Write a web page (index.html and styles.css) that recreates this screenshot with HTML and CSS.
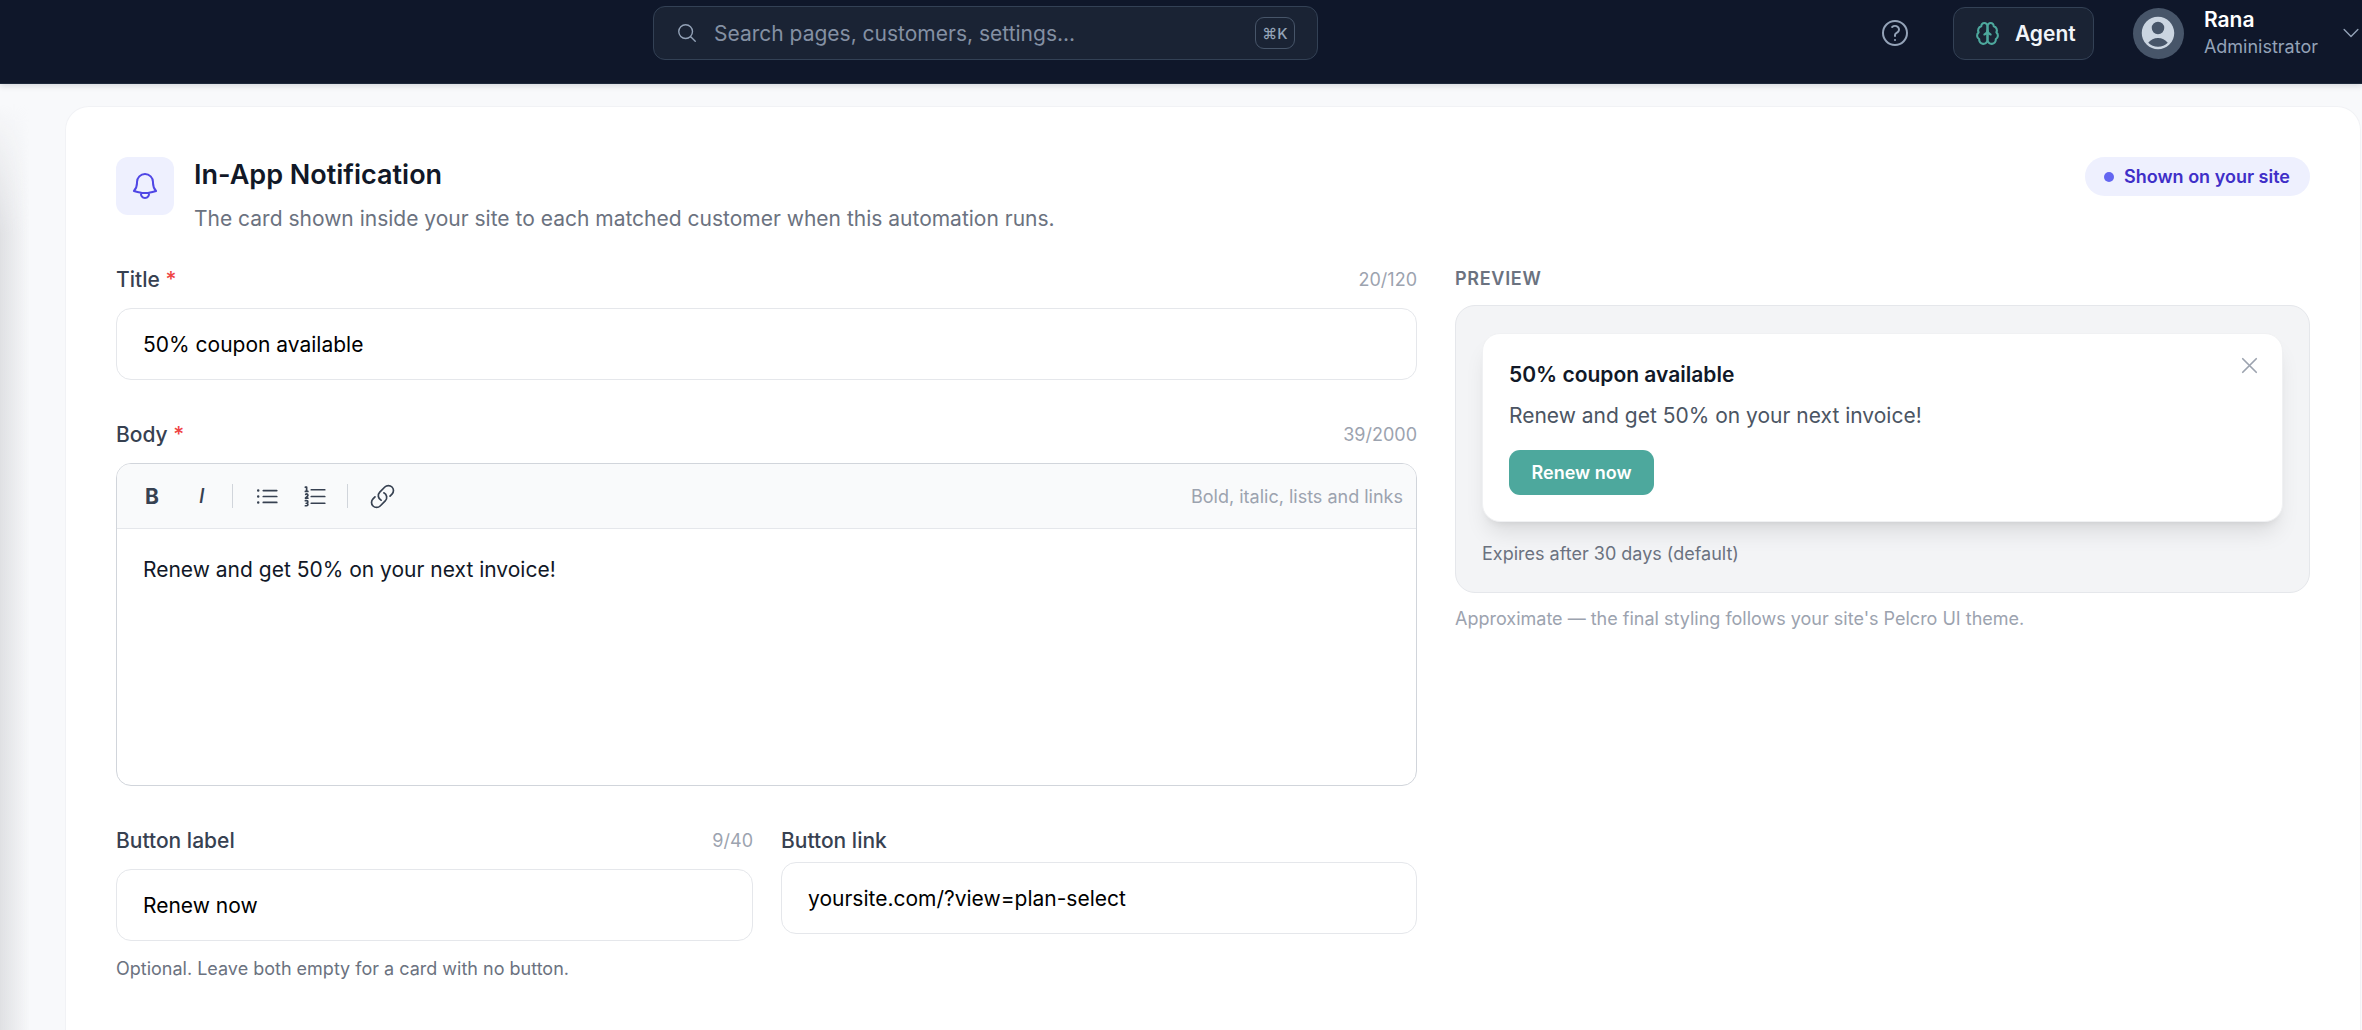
FILE: index.html
```html
<!DOCTYPE html>
<html lang="en">
<head>
    <meta charset="UTF-8">
    <meta name="viewport" content="width=device-width, initial-scale=1.0">
    <title>In-App Notification</title>
    <link rel="stylesheet" href="styles.css">
</head>
<body>
    <header class="topbar">
        <div class="search">
            <svg class="search-icon" viewBox="0 0 24 24" fill="none" stroke="currentColor" stroke-width="1.5" stroke-linecap="round" stroke-linejoin="round">
                <path d="m21 21-5.197-5.197m0 0A7.5 7.5 0 1 0 5.196 5.196a7.5 7.5 0 0 0 10.607 10.607Z"></path>
            </svg>
            <span class="search-text">Search pages, customers, settings...</span>
            <kbd class="kbd">⌘K</kbd>
        </div>
        <div class="topbar-right">
            <svg class="help-icon" viewBox="0 0 24 24" fill="none" stroke="currentColor" stroke-width="1.5" stroke-linecap="round" stroke-linejoin="round">
                <path d="M9.879 7.519c1.171-1.025 3.071-1.025 4.242 0 1.172 1.025 1.172 2.687 0 3.712-.203.179-.43.326-.67.442-.745.361-1.45.999-1.45 1.827v.75M21 12a9 9 0 1 1-18 0 9 9 0 0 1 18 0Zm-9 5.25h.008v.008H12v-.008Z"></path>
            </svg>
            <button class="agent-btn">
                <svg class="agent-icon" viewBox="0 0 24 24" fill="none" stroke="currentColor" stroke-width="2" stroke-linecap="round" stroke-linejoin="round">
                    <path d="M12 5a3 3 0 1 0-5.997.125 4 4 0 0 0-2.526 5.77 4 4 0 0 0 .556 6.588A4 4 0 1 0 12 18Z"></path>
                    <path d="M12 5a3 3 0 1 1 5.997.125 4 4 0 0 1 2.526 5.77 4 4 0 0 1-.556 6.588A4 4 0 1 1 12 18Z"></path>
                    <path d="M15 13a4.5 4.5 0 0 1-3-4 4.5 4.5 0 0 1-3 4"></path>
                </svg>
                Agent
            </button>
            <div class="avatar">
                <svg viewBox="0 0 24 24" fill="currentColor">
                    <path fill-rule="evenodd" clip-rule="evenodd" d="M18.685 19.097A9.723 9.723 0 0 0 21.75 12c0-5.385-4.365-9.75-9.75-9.75S2.25 6.615 2.25 12a9.723 9.723 0 0 0 3.065 7.097A9.716 9.716 0 0 0 12 21.75a9.716 9.716 0 0 0 6.685-2.653Zm-12.54-1.285A7.486 7.486 0 0 1 12 15a7.486 7.486 0 0 1 5.855 2.812A8.224 8.224 0 0 1 12 20.25a8.224 8.224 0 0 1-5.855-2.438ZM15.75 9a3.75 3.75 0 1 1-7.5 0 3.75 3.75 0 0 1 7.5 0Z"></path>
                </svg>
            </div>
            <div class="user">
                <div class="user-name">Rana</div>
                <div class="user-role">Administrator</div>
            </div>
            <svg class="chevron" viewBox="0 0 24 24" fill="none" stroke="currentColor" stroke-width="1.5" stroke-linecap="round" stroke-linejoin="round">
                <path d="m19.5 8.25-7.5 7.5-7.5-7.5"></path>
            </svg>
        </div>
    </header>

    <main class="main">
        <section class="card">
            <div class="card-head">
                <div class="bell-box">
                    <svg viewBox="0 0 24 24" fill="none" stroke="currentColor" stroke-width="1.5" stroke-linecap="round" stroke-linejoin="round">
                        <path d="M14.857 17.082a23.848 23.848 0 0 0 5.454-1.31A8.967 8.967 0 0 1 18 9.75V9A6 6 0 0 0 6 9v.75a8.967 8.967 0 0 1-2.312 6.022c1.733.64 3.56 1.085 5.455 1.31m5.714 0a24.255 24.255 0 0 1-5.714 0m5.714 0a3 3 0 1 1-5.714 0"></path>
                    </svg>
                </div>
                <div class="card-titles">
                    <h2>In-App Notification</h2>
                    <p>The card shown inside your site to each matched customer when this automation runs.</p>
                </div>
                <div class="pill"><span class="pill-dot"></span>Shown on your site</div>
            </div>

            <div class="columns">
                <div class="form">
                    <div class="field field-title">
                        <div class="label-row">
                            <label>Title <span class="req">*</span></label>
                            <span class="count">20/120</span>
                        </div>
                        <div class="input">50% coupon available</div>
                    </div>

                    <div class="field field-body">
                        <div class="label-row">
                            <label>Body <span class="req">*</span></label>
                            <span class="count">39/2000</span>
                        </div>
                        <div class="editor">
                            <div class="toolbar">
                                <span class="tool-b">B</span>
                                <span class="tool-i">I</span>
                                <span class="tool-sep"></span>
                                <svg class="tool-icon" viewBox="0 0 24 24" fill="none" stroke="currentColor" stroke-width="1.5" stroke-linecap="round" stroke-linejoin="round">
                                    <path d="M8.25 6.75h12M8.25 12h12m-12 5.25h12M3.75 6.75h.007v.008H3.75V6.75Zm.375 0a.375.375 0 1 1-.75 0 .375.375 0 0 1 .75 0ZM3.75 12h.007v.008H3.75V12Zm.375 0a.375.375 0 1 1-.75 0 .375.375 0 0 1 .75 0Zm-.375 5.25h.007v.008H3.75v-.008Zm.375 0a.375.375 0 1 1-.75 0 .375.375 0 0 1 .75 0Z"></path>
                                </svg>
                                <svg class="tool-icon" viewBox="0 0 24 24" fill="none" stroke="currentColor" stroke-width="1.5" stroke-linecap="round" stroke-linejoin="round">
                                    <path d="M8.242 5.992h12m-12 6.003H20.24m-12 5.999h12M4.117 7.495v-3.75H2.99m1.125 3.75H2.99m1.125 0H5.24m-1.92 2.577a1.125 1.125 0 1 1 1.591 1.59l-1.83 1.83h2.16M2.99 15.745h1.125a1.125 1.125 0 0 1 0 2.25H3.74m0-.002h.375a1.125 1.125 0 0 1 0 2.25H2.99"></path>
                                </svg>
                                <span class="tool-sep"></span>
                                <svg class="tool-icon" viewBox="0 0 24 24" fill="none" stroke="currentColor" stroke-width="1.5" stroke-linecap="round" stroke-linejoin="round">
                                    <path d="M13.19 8.688a4.5 4.5 0 0 1 1.242 7.244l-4.5 4.5a4.5 4.5 0 0 1-6.364-6.364l1.757-1.757m13.35-.622 1.757-1.757a4.5 4.5 0 0 0-6.364-6.364l-4.5 4.5a4.5 4.5 0 0 0 1.242 7.244"></path>
                                </svg>
                                <span class="toolbar-hint">Bold, italic, lists and links</span>
                            </div>
                            <div class="editor-body">Renew and get 50% on your next invoice!</div>
                        </div>
                    </div>

                    <div class="button-row">
                        <div class="field field-label">
                            <div class="label-row">
                                <label>Button label</label>
                                <span class="count">9/40</span>
                            </div>
                            <div class="input">Renew now</div>
                            <p class="help">Optional. Leave both empty for a card with no button.</p>
                        </div>
                        <div class="field field-link">
                            <div class="label-row">
                                <label>Button link</label>
                            </div>
                            <div class="input">yoursite.com/?view=plan-select</div>
                        </div>
                    </div>
                </div>

                <aside class="preview">
                    <div class="preview-label">PREVIEW</div>
                    <div class="preview-box">
                        <div class="notice">
                            <svg class="notice-close" viewBox="0 0 24 24" fill="none" stroke="currentColor" stroke-width="1.5" stroke-linecap="round" stroke-linejoin="round">
                                <path d="M6 18 18 6M6 6l12 12"></path>
                            </svg>
                            <div class="notice-title">50% coupon available</div>
                            <div class="notice-body">Renew and get 50% on your next invoice!</div>
                            <button class="notice-btn">Renew now</button>
                        </div>
                        <div class="expires">Expires after 30 days (default)</div>
                    </div>
                    <p class="preview-note">Approximate — the final styling follows your site's Pelcro UI theme.</p>
                </aside>
            </div>
        </section>
    </main>
</body>
</html>
```

FILE: styles.css
```css
* {
    margin: 0;
    padding: 0;
    box-sizing: border-box;
    font-family: Inter, "Noto Sans", sans-serif;
}

html, body {
    height: 1030px;
    overflow: hidden;
}

body {
    background: #f8f9fb;
    color: #111827;
    font-size: 21px;
}

.topbar {
    height: 84px;
    background: #0f172a;
    border-bottom: 1px solid #1e293b;
    box-shadow: 0 2px 6px rgba(15, 23, 42, 0.14);
    display: flex;
    align-items: flex-start;
    padding: 6px 0 0 653px;
    position: relative;
    z-index: 2;
}

.search {
    width: 671px;
    height: 54px;
    background: #1a2334;
    border: 1px solid #334155;
    border-radius: 12px;
    display: flex;
    align-items: center;
    padding: 0 22px;
}

.search-icon {
    width: 22px;
    height: 22px;
    color: #94a3b8;
    margin-right: 16px;
}

.search-text {
    color: #8490a3;
    font-size: 21px;
    flex: 1;
}

.kbd {
    width: 40px;
    height: 32px;
    border: 1px solid #475569;
    border-radius: 9px;
    color: #94a3b8;
    font-size: 15px;
    font-weight: 500;
    display: flex;
    align-items: center;
    justify-content: center;
}

.topbar-right {
    display: flex;
    align-items: center;
    height: 54px;
    margin-left: 561px;
    white-space: nowrap;
}

.help-icon {
    width: 32px;
    height: 32px;
    color: #94a3b8;
    flex: none;
    margin-left: 0;
}

.agent-btn {
    width: 141px;
    height: 53px;
    margin-left: 42px;
    background: #1a2334;
    border: 1px solid #334155;
    border-radius: 12px;
    color: #f1f5f9;
    font-size: 21px;
    font-weight: 600;
    display: flex;
    align-items: center;
    gap: 15px;
    padding-left: 21px;
    flex: none;
}

.agent-icon {
    width: 25px;
    height: 25px;
    color: #4da89d;
}

.avatar {
    width: 51px;
    height: 51px;
    margin-left: 39px;
    border-radius: 50%;
    background: #475569;
    color: #cbd5e1;
    display: flex;
    align-items: center;
    justify-content: center;
    flex: none;
}

.avatar svg {
    width: 40px;
    height: 40px;
}

.user {
    margin-left: 20px;
    flex: none;
}

.user-name {
    color: #fff;
    font-size: 21px;
    font-weight: 600;
    line-height: 27px;
}

.user-role {
    color: #94a3b8;
    font-size: 18px;
    line-height: 27px;
}

.chevron {
    width: 22px;
    height: 22px;
    color: #94a3b8;
    margin-left: 22px;
    flex: none;
}

.main {
    height: 946px;
    padding: 22px 1px 0 65px;
    position: relative;
    overflow: hidden;
}

/* soft shadow of the collapsed sidebar */
.main::before {
    content: "";
    position: absolute;
    left: 0;
    top: 0;
    bottom: 0;
    width: 30px;
    background: linear-gradient(to right, #dfe0e3, rgba(248, 249, 251, 0));
    -webkit-mask-image: linear-gradient(to bottom, transparent 20px, #000 150px);
    mask-image: linear-gradient(to bottom, transparent 20px, #000 150px);
}

.card {
    background: #fff;
    border-radius: 24px 24px 0 0;
    border: 1px solid #f1f2f5;
    border-bottom: none;
    height: 1000px;
    padding: 50px 50px 0 50px;
    position: relative;
}

.card-head {
    display: flex;
    align-items: flex-start;
}

.bell-box {
    width: 58px;
    height: 58px;
    background: #eef0fe;
    border-radius: 12px;
    color: #4f46e5;
    display: flex;
    align-items: center;
    justify-content: center;
    flex: none;
}

.bell-box svg {
    width: 32px;
    height: 32px;
}

.card-titles {
    margin-left: 20px;
    flex: 1;
}

.card-titles h2 {
    font-size: 27px;
    font-weight: 600;
    line-height: 36px;
    color: #111827;
}

.card-titles p {
    font-size: 21px;
    line-height: 32px;
    color: #6b7280;
    margin-top: 10px;
}

.pill {
    height: 39px;
    background: #eef0fe;
    border-radius: 20px;
    color: #3f2fc8;
    font-size: 18px;
    font-weight: 600;
    display: flex;
    align-items: center;
    padding: 0 20px 0 19px;
    flex: none;
}

.pill-dot {
    width: 10px;
    height: 10px;
    background: #6366f1;
    border-radius: 50%;
    margin-right: 10px;
}

.columns {
    display: grid;
    grid-template-columns: 1301px 855px;
    column-gap: 38px;
    margin-top: 29px;
}

.label-row {
    display: flex;
    justify-content: space-between;
    align-items: center;
    height: 30px;
}

.label-row label {
    font-size: 21px;
    font-weight: 500;
    color: #374151;
}

.req {
    color: #ef4444;
}

.count {
    font-size: 18px;
    color: #9ca3af;
}

.input {
    height: 72px;
    border: 1px solid #e5e7eb;
    border-radius: 15px;
    color: #000;
    font-size: 21px;
    display: flex;
    align-items: center;
    padding: 0 26px;
    margin-top: 14px;
}

.field-body {
    margin-top: 39px;
}

.editor {
    height: 323px;
    border: 1px solid #d1d5db;
    border-radius: 15px;
    margin-top: 14px;
    overflow: hidden;
}

.toolbar {
    height: 65px;
    background: #f9fafb;
    border-bottom: 1px solid #e5e7eb;
    display: flex;
    align-items: center;
    padding: 0 13px 0 28px;
    color: #374151;
}

.tool-b {
    font-size: 21px;
    font-weight: 700;
    width: 54px;
}

.tool-i {
    font-size: 20px;
    font-weight: 500;
    font-style: italic;
    width: 33px;
}

.tool-sep {
    width: 1px;
    height: 24px;
    background: #d1d5db;
}

.tool-icon {
    width: 27px;
    height: 27px;
    margin-left: 21px;
}

.tool-icon + .tool-sep {
    margin-left: 18px;
}

.toolbar-hint {
    margin-left: auto;
    font-size: 18px;
    color: #9ca3af;
}

.editor-body {
    padding: 26px;
    font-size: 21px;
    line-height: 30px;
    color: #111827;
}

.button-row {
    display: grid;
    grid-template-columns: 637px 636px;
    column-gap: 28px;
    margin-top: 39px;
}

.field-label .input {
    margin-top: 14px;
}

.field-link .input {
    margin-top: 7px;
}

.help {
    font-size: 18px;
    color: #6b7280;
    margin-top: 17px;
}

.preview-label {
    font-size: 18px;
    font-weight: 600;
    color: #6b7280;
    letter-spacing: 0.7px;
    height: 30px;
    line-height: 30px;
}

.preview-box {
    height: 288px;
    margin-top: 11px;
    background: #f3f4f6;
    border: 1px solid #e5e7eb;
    border-radius: 20px;
    padding: 27px 26px 0;
}

.notice {
    height: 189px;
    background: #fff;
    border-radius: 18px;
    border: 1px solid #f0f1f3;
    box-shadow: 0 15px 22px -5px rgba(0, 0, 0, 0.1), 0 6px 9px -6px rgba(0, 0, 0, 0.1);
    padding: 26px 26px 0;
    position: relative;
}

.notice-close {
    position: absolute;
    top: 18px;
    right: 19px;
    width: 27px;
    height: 27px;
    color: #9ca3af;
}

.notice-title {
    font-size: 21px;
    font-weight: 600;
    color: #111827;
    line-height: 30px;
}

.notice-body {
    font-size: 21px;
    color: #4b5563;
    line-height: 30px;
    margin-top: 11px;
}

.notice-btn {
    display: block;
    width: 145px;
    height: 45px;
    margin-top: 19px;
    background: #4da89d;
    border: none;
    border-radius: 11px;
    color: #fff;
    font-size: 18px;
    font-weight: 600;
}

.expires {
    font-size: 18px;
    color: #6b7280;
    margin-top: 21px;
}

.preview-note {
    font-size: 18px;
    color: #9ca3af;
    margin-top: 15px;
}
```
